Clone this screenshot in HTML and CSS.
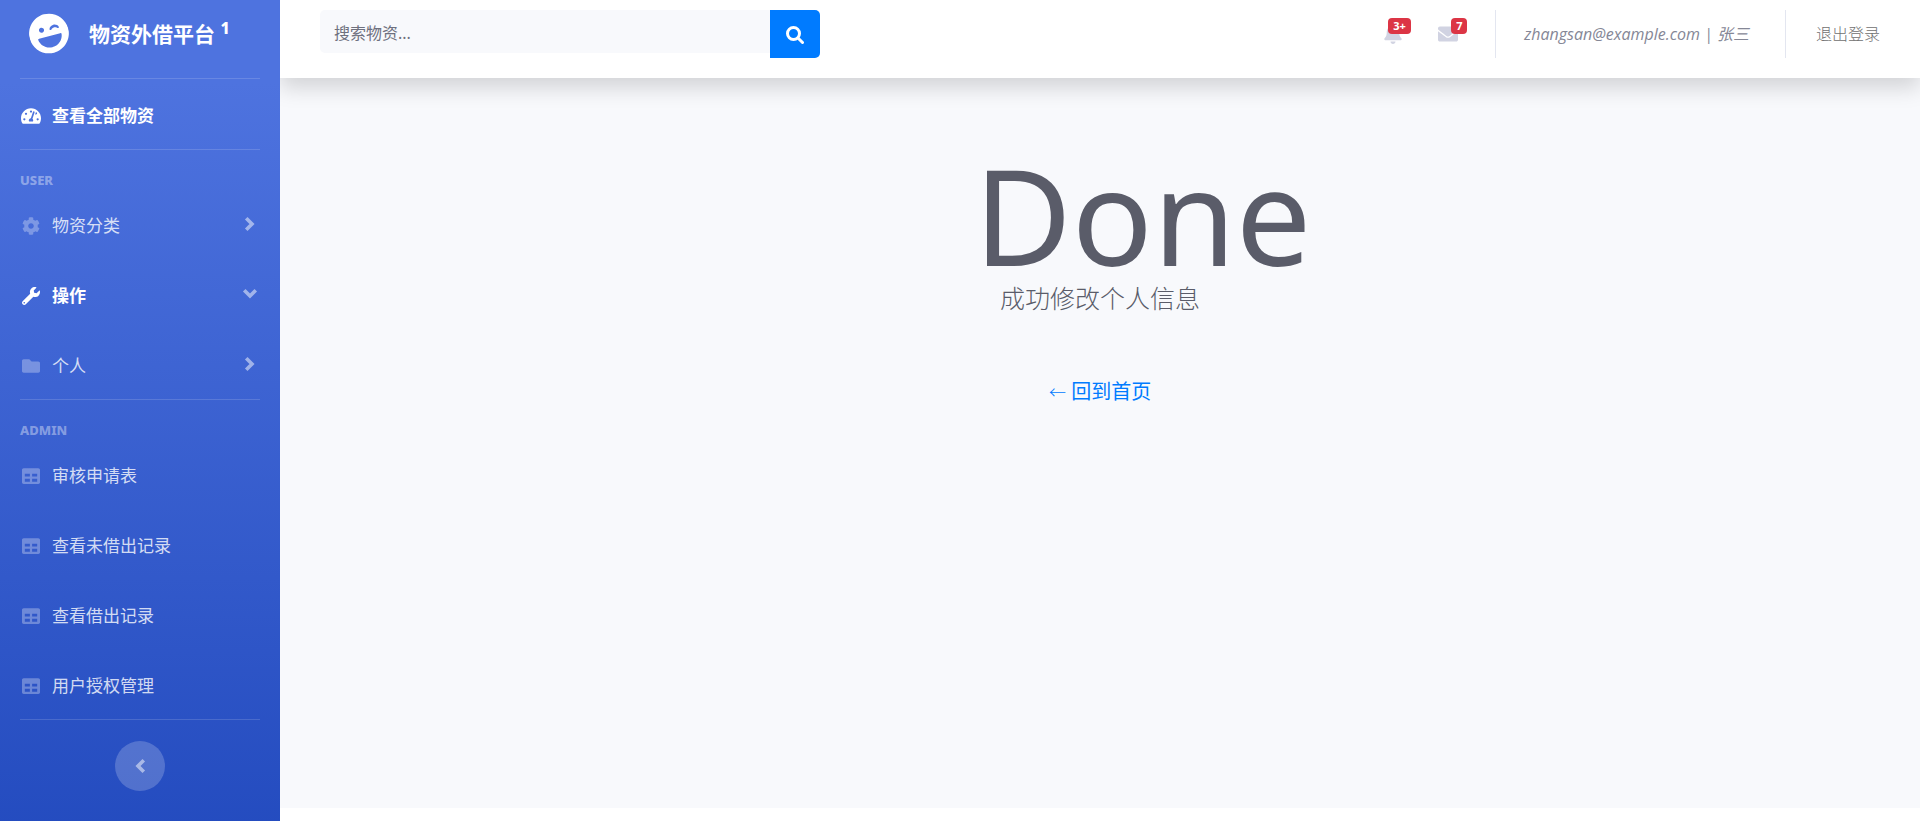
FILE: index.html
```html
<!DOCTYPE html>
<html lang="zh-CN">
<head>
<meta charset="utf-8">
<title>物资外借平台</title>
<link rel="stylesheet" href="styles.css">
</head>
<body>
<svg class="defs" aria-hidden="true">
  <symbol id="table" viewBox="0 0 512 512"><path d="M464 32H48C21.49 32 0 53.49 0 80v352c0 26.51 21.49 48 48 48h416c26.51 0 48-21.49 48-48V80c0-26.51-21.49-48-48-48zM224 416H80v-80h144v80zm0-144H80v-80h144v80zm208 144H288v-80h144v80zm0-144H288v-80h144v80z"/></symbol>
  <symbol id="chevron" viewBox="0 0 12 16"><path d="M3.500 3.500L8 8l-4.500 4.500" fill="none" stroke="currentColor" stroke-width="3.600" stroke-linecap="square"/></symbol>
</svg>
<div class="wrapper">
  <nav class="sidebar">
    <a class="brand" href="#">
      <svg class="brand-icon" viewBox="0 0 496 512"><path fill-rule="evenodd" d="M248 8C111 8 0 119 0 256s111 248 248 248 248-111 248-248S385 8 248 8zM268.100 206.100c4-25.200 34.200-42.100 59.900-42.100s55.900 16.900 59.900 42.100c1.700 11.100-11.400 18.300-19.800 10.800l-9.500-8.500c-14.800-13.200-46.200-13.200-61 0L288 217c-8.400 7.400-21.600.3-19.900-10.900zM168 160c17.700 0 32 14.300 32 32s-14.300 32-32 32-32-14.300-32-32 14.300-32 32-32zM398.900 299.900C391 374 327 432 250 432h-4C169 432 105 374 97.100 299.900 96 293 103 288 112 288h272c9.500 0 16 5 14.900 11.900z"/></svg>
      <span class="brand-text">物资外借平台 <sup>1</sup></span>
    </a>
    <hr>
    <ul>
      <li><a class="item active" href="#"><svg class="icon gauge" viewBox="0 0 576 512"><path fill-rule="evenodd" d="M288 32C129 32 0 161 0 320c0 53 14 102 39 145 6 9 16 15 27 15h444c11 0 21-6 27-15 25-43 39-92 39-145C576 161 447 32 288 32zm0 64a32 32 0 1 1 0 64 32 32 0 0 1 0-64zM96 384a32 32 0 1 1 0-64 32 32 0 0 1 0 64zm48-160a32 32 0 1 1 0-64 32 32 0 0 1 0 64zm247-71l-61 184c13 12 22 28 22 47 0 12-4 23-9 32H233c-5-9-9-20-9-32 0-34 27-62 60-64l61-182c4-13 18-20 30-16 13 4 20 18 16 31zm15 61l23-69c10-1 35 7 35 31 0 35-41 43-58 38zm74 170a32 32 0 1 1 0-64 32 32 0 0 1 0 64z"/></svg><span>查看全部物资</span></a></li>
    </ul>
    <hr>
    <h2>USER</h2>
    <ul>
      <li><a class="item" href="#"><svg class="icon" viewBox="0 0 512 512"><path d="M487.400 315.700l-42.600-24.600c4.300-23.200 4.300-47 0-70.200l42.600-24.600c4.900-2.800 7.100-8.600 5.500-14-11.100-35.600-30-67.800-54.700-94.600-3.800-4.100-10-5.100-14.800-2.300L380.800 110c-17.900-15.400-38.500-27.300-60.800-35.100V25.800c0-5.600-3.900-10.500-9.400-11.700-36.700-8.200-74.300-7.800-109.200 0-5.500 1.200-9.400 6.100-9.400 11.700V75c-22.200 7.900-42.800 19.800-60.800 35.100L88.700 85.500c-4.900-2.800-11-1.900-14.800 2.300-24.700 26.700-43.600 58.900-54.700 94.600-1.700 5.400.6 11.200 5.500 14L67.300 221c-4.300 23.200-4.300 47 0 70.200l-42.600 24.600c-4.900 2.800-7.100 8.600-5.500 14 11.100 35.600 30 67.800 54.700 94.600 3.800 4.100 10 5.100 14.800 2.300l42.600-24.600c17.900 15.400 38.500 27.300 60.800 35.100v49.200c0 5.600 3.900 10.500 9.400 11.700 36.700 8.200 74.300 7.800 109.200 0 5.500-1.200 9.400-6.100 9.400-11.700v-49.200c22.200-7.900 42.800-19.800 60.800-35.100l42.600 24.600c4.900 2.800 11 1.900 14.800-2.300 24.700-26.700 43.600-58.900 54.700-94.600 1.500-5.500-.7-11.300-5.600-14.100zM256 336c-44.100 0-80-35.900-80-80s35.900-80 80-80 80 35.900 80 80-35.900 80-80 80z"/></svg><span>物资分类</span><svg class="arrow"><use href="#chevron"/></svg></a></li>
      <li><a class="item active" href="#"><svg class="icon" viewBox="0 0 512 512"><path d="M507.730 109.100c-2.240-9.030-13.540-12.090-20.120-5.510l-74.360 74.360-67.880-11.310-11.310-67.880 74.360-74.360c6.620-6.620 3.430-17.900-5.660-20.160-47.380-11.740-99.550.91-136.580 37.930-39.640 39.640-50.550 97.100-34.050 147.200L18.740 402.760c-24.990 24.990-24.990 65.510 0 90.500 24.990 24.990 65.510 24.990 90.500 0l213.210-213.210c50.120 16.710 107.470 5.680 147.370-34.220 37.070-37.070 49.700-89.320 37.910-136.730zM64 472c-13.250 0-24-10.750-24-24 0-13.260 10.750-24 24-24s24 10.740 24 24c0 13.250-10.750 24-24 24z"/></svg><span>操作</span><svg class="arrow open"><use href="#chevron"/></svg></a></li>
      <li><a class="item" href="#"><svg class="icon" viewBox="0 0 512 512"><path d="M464 128H272l-64-64H48C21.490 64 0 85.490 0 112v288c0 26.510 21.490 48 48 48h416c26.510 0 48-21.490 48-48V176c0-26.510-21.490-48-48-48z"/></svg><span>个人</span><svg class="arrow"><use href="#chevron"/></svg></a></li>
    </ul>
    <hr>
    <h2>ADMIN</h2>
    <ul>
      <li><a class="item" href="#"><svg class="icon"><use href="#table"/></svg><span>审核申请表</span></a></li>
      <li><a class="item" href="#"><svg class="icon"><use href="#table"/></svg><span>查看未借出记录</span></a></li>
      <li><a class="item" href="#"><svg class="icon"><use href="#table"/></svg><span>查看借出记录</span></a></li>
      <li><a class="item" href="#"><svg class="icon"><use href="#table"/></svg><span>用户授权管理</span></a></li>
    </ul>
    <hr>
    <button class="toggle" type="button" aria-label="收起侧栏"><svg class="arrow back"><use href="#chevron"/></svg></button>
  </nav>
  <div class="content">
    <header class="topbar">
      <form class="search">
        <input type="text" placeholder="搜索物资..." aria-label="搜索物资">
        <button type="button" aria-label="搜索"><svg viewBox="0 0 18 18"><circle cx="7.500" cy="7.500" r="6"/><path d="M12 12L16.500 16.500"/></svg></button>
      </form>
      <div class="tools">
        <a class="alert" href="#" aria-label="通知"><svg class="bell" viewBox="0 0 448 512"><path d="M224 512c35.320 0 63.970-28.650 63.970-64H160.030c0 35.350 28.650 64 63.970 64zm215.390-149.710c-19.320-20.760-55.470-51.990-55.470-154.290 0-77.700-54.480-139.900-127.940-155.160V32c0-17.670-14.320-32-31.980-32s-31.980 14.330-31.980 32v20.840C118.560 68.100 64.080 130.300 64.080 208c0 102.300-36.150 133.530-55.470 154.290-6 6.450-8.660 14.160-8.610 21.710.11 16.400 12.980 32 32.100 32h383.800c19.120 0 32-15.600 32.100-32 .05-7.550-2.610-15.270-8.610-21.710z"/></svg><span class="badge">3+</span></a>
        <a class="alert" href="#" aria-label="消息"><svg class="mail" viewBox="0 0 512 512"><path d="M502.300 190.800c3.900-3.100 9.700-.2 9.700 4.700V400c0 26.500-21.500 48-48 48H48c-26.500 0-48-21.500-48-48V195.600c0-5 5.700-7.800 9.700-4.700 22.400 17.400 52.100 39.500 154.100 113.600 21.100 15.400 56.700 47.800 92.200 47.600 35.700.3 72-32.800 92.300-47.600 102-74.100 131.600-96.300 154-113.700zM256 320c23.200.4 56.600-29.200 73.400-41.400 132.700-96.300 142.800-104.700 173.400-128.700 5.800-4.500 9.200-11.500 9.200-18.900v-19c0-26.500-21.500-48-48-48H48c-26.500 0-48 21.500-48 48v19c0 7.400 3.400 14.300 9.200 18.900 30.600 23.900 40.700 32.400 173.400 128.700 16.800 12.200 50.200 41.800 73.400 41.400z"/></svg><span class="badge">7</span></a>
        <a class="user" href="#"><i>zhangsan@example.com | 张三</i></a>
        <a class="logout" href="#">退出登录</a>
      </div>
    </header>
    <main>
      <div class="message">
        <h1>Done</h1>
        <p>成功修改个人信息</p>
        <a href="#"><span class="back-arrow">←</span> 回到首页</a>
      </div>
    </main>
  </div>
</div>
</body>
</html>
```
FILE: styles.css
```css
* { box-sizing: border-box; }
body {
  margin: 0;
  color: #858796;
  background: #fff;
  font: 300 16px/24px "Noto Sans", "Noto Sans CJK SC", sans-serif;
}
a { text-decoration: none; }
h1, h2, p, ul { margin: 0; padding: 0; }
ul { list-style: none; }
svg { display: block; flex: none; fill: currentColor; }
.defs { display: none; }
.wrapper { display: flex; min-height: 100vh; }

.sidebar {
  position: relative;
  z-index: 1;
  flex: none;
  display: flex;
  flex-direction: column;
  width: 280px;
  color: #fff;
  background: linear-gradient(180deg, #4e73df 10%, #224abe 105%);
}
.sidebar hr {
  width: 240px;
  height: 1px;
  margin: 0 auto;
  border: 0;
  background: rgba(255, 255, 255, .15);
}
.brand {
  display: flex;
  align-items: center;
  gap: 20px;
  height: 78px;
  padding: 0 29px 12px;
  color: #fff;
  font-size: 21px;
  font-weight: 700;
}
.brand-icon { width: 40px; height: 41px; transform: rotate(-15deg); }
.brand-text { padding-top: 2px; }
.brand sup { font-size: 16px; line-height: 0; font-weight: 800; }
.sidebar h2 {
  height: 39px;
  padding: 18px 20px 0;
  color: rgba(255, 255, 255, .4);
  font-size: 13px;
  line-height: 24px;
  font-weight: 800;
}
.item {
  display: flex;
  align-items: center;
  gap: 12px;
  height: 70px;
  padding: 4px 20px 0 22px;
  color: rgba(255, 255, 255, .8);
  font-size: 17px;
  font-weight: 400;
}
.item.active { color: #fff; font-weight: 700; }
.icon { width: 18px; height: 18px; color: rgba(255, 255, 255, .3); }
.active .icon { color: #fff; }
.icon.gauge { width: 20px; margin: 0 -1px; }
.arrow { width: 12px; height: 16px; color: rgba(255, 255, 255, .5); }
.item .arrow { margin: 0 4px 4px auto; }
.arrow.open { transform: rotate(90deg); }
.arrow.back { transform: rotate(180deg); }
.toggle {
  display: flex;
  align-items: center;
  justify-content: center;
  width: 50px;
  height: 50px;
  margin: 21px auto 30px;
  padding: 0;
  border: 0;
  border-radius: 50%;
  background: rgba(255, 255, 255, .2);
}

.content { flex: 1; display: flex; flex-direction: column; min-width: 0; padding-bottom: 13px; }
.topbar {
  display: flex;
  align-items: flex-start;
  justify-content: space-between;
  height: 78px;
  padding: 10px 20px 0 40px;
  background: #fff;
  box-shadow: 0 10px 20px rgba(0, 0, 0, .15);
  position: relative;
}
.search { display: flex; align-items: flex-start; width: 500px; }
.search input {
  flex: 1;
  min-width: 0;
  height: 43px;
  padding: 2px 14px 0;
  border: 0;
  border-radius: 5px 0 0 5px;
  background: #f8f9fc;
  font: inherit;
  font-weight: 400;
}
.search input::placeholder { color: #6e707e; opacity: 1; }
.search button {
  display: flex;
  align-items: center;
  justify-content: center;
  width: 50px;
  height: 48px;
  padding: 2px 0 0;
  border: 0;
  border-radius: 0 5px 5px 0;
  background: #007bff;
}
.search button svg { width: 18px; height: 18px; fill: none; stroke: #fff; stroke-width: 3; stroke-linecap: round; }
.tools { display: flex; height: 48px; align-items: stretch; }
.alert {
  position: relative;
  display: flex;
  align-items: center;
  width: 54px;
  color: #d1d3e2;
}
.mail { width: 20px; height: 20px; }
.bell { width: 18px; height: 20px; }
.alert:nth-child(2) { width: 57px; }
.badge {
  position: absolute;
  top: 8px;
  left: 4px;
  padding: 0 5px;
  border-radius: 4px;
  color: #fff;
  background: #dc3545;
  font-size: 11px;
  line-height: 16px;
  font-weight: 700;
}
.mail + .badge { left: 13px; }
.user, .logout {
  display: flex;
  align-items: center;
  border-left: 1px solid #e3e6f0;
  padding-left: 30px;
  color: #858796;
  white-space: nowrap;
}
.user {
  padding: 0 36px 0 28px;
  font-family: "Open Sans", "Noto Sans CJK SC", sans-serif;
  font-weight: 400;
}
.logout { padding-right: 20px; color: #707070; }

main { flex: 1; padding: 68px 24px; background: #f8f9fc; }
.message { width: 240px; margin: 0 auto; color: #5a5c69; }
.message h1 {
  width: 360px;
  margin-left: -6px;
  font-size: 134px;
  line-height: 136px;
  font-weight: 400;
}
.message p { padding: 0 20px; font-size: 25px; line-height: 32px; white-space: nowrap; }
.message a { display: inline-block; margin: 63px 0 0 69px; color: #007bff; font-size: 20px; line-height: 30px; font-weight: 400; white-space: nowrap; }
.back-arrow { font-size: 17px; font-weight: 300; }
```
